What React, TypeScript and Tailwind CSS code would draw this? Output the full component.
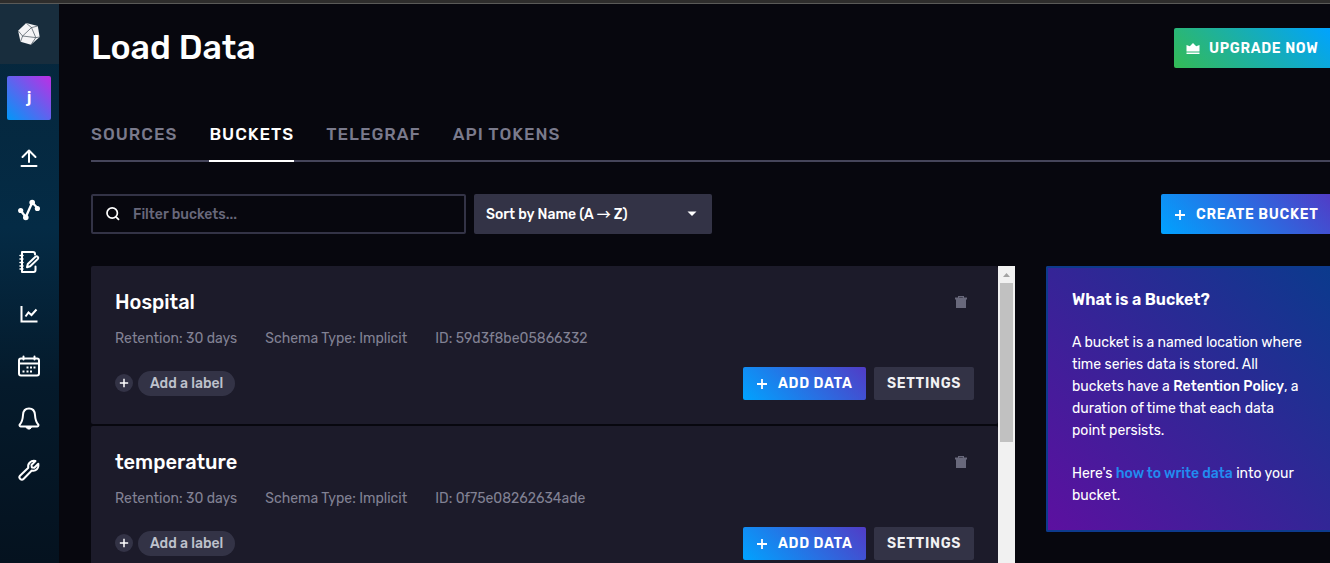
import React from 'react';
import type { ReactNode } from 'react';

type Bucket = { name: string; id: string };

const buckets: Bucket[] = [
  { name: 'Hospital', id: '59d3f8be05866332' },
  { name: 'temperature', id: '0f75e08262634ade' },
];

const tabs = ['Sources', 'Buckets', 'Telegraf', 'API Tokens'];

function Logo() {
  return (
    <svg viewBox="0 0 24 24" className="size-6" fill="#f4f4f6" stroke="#22303d" strokeWidth="0.6" strokeLinejoin="round">
      <path d="M9.2 1.1 20.800 4 22.700 15 14 22.700 3.500 19.800 1.100 8.700Z" stroke="none" />
      <path d="M14.500 5.600 5.600 14 18.800 15.600ZM9.200 1.100 14.500 5.600 20.800 4M1.100 8.700 5.600 14 3.500 19.800M22.700 15 18.800 15.600 14 22.700" fill="none" />
    </svg>
  );
}

function NavIcon({ children }: { children: ReactNode }) {
  return (
    <svg viewBox="0 0 24 24" className="size-6" fill="none" stroke="#fff" strokeWidth="2" strokeLinecap="round" strokeLinejoin="round">
      {children}
    </svg>
  );
}

const navItems: { label: string; icon: ReactNode }[] = [
  { label: 'Load Data', icon: <path d="M12 16V5M5.500 11 12 4.500l6.500 6.500M4.500 20h15" /> },
  {
    label: 'Data Explorer',
    icon: (
      <>
        <path d="M3.500 12.500 8.800 19 15.200 4.500 20.500 10" strokeWidth="2.300" />
        <g fill="#fff" stroke="none">
          <circle cx="3.700" cy="12.500" r="2.600" />
          <circle cx="8.800" cy="19.500" r="2.800" />
          <circle cx="15.200" cy="4.500" r="2.800" />
          <circle cx="20.400" cy="10.500" r="2.600" />
        </g>
      </>
    ),
  },
  {
    label: 'Notebooks',
    icon: (
      <>
        <path d="M18 4.500V4a2 2 0 0 0-2-2H5v20h11.500a2 2 0 0 0 2-2v-3.500" />
        <path d="M3 5.500h3M3 9h3M3 12.500h3M3 16h3M3 19h3" strokeWidth="1.500" />
        <path d="M10 17.200 10.800 14 18.700 6.600Q19.700 5.800 20.700 6.800T20.900 8.900L13.200 16.300Z" />
      </>
    ),
  },
  { label: 'Dashboards', icon: <path d="M4.500 4V19.500H20.500M8.500 14.500 11.500 10.500 14.500 13 19.500 7.500" strokeLinejoin="miter" strokeLinecap="butt" /> },
  {
    label: 'Tasks',
    icon: (
      <>
        <rect x="2" y="4.500" width="20" height="17" rx="2" />
        <path d="M2 9.500h20M6.500 2.500v3M17.500 2.500v3" />
        <path d="M9.500 13.500h2M13 13.500h2M16.500 13.500h2M5.500 17.500h2M9.500 17.500h2M13 17.500h2" strokeLinecap="butt" />
      </>
    ),
  },
  {
    label: 'Alerts',
    icon: (
      <>
        <path d="M12 2.500c-4 0-5.800 3-6 6.500-.3 5-1.300 7.500-3.200 9.500-.6.700-.2 2 .8 2h16.800c1 0 1.400-1.300.8-2-1.900-2-2.900-4.500-3.200-9.500C17.800 5.500 16 2.500 12 2.500Z" />
        <path d="M9.500 21.500h5l-1.500 1.500h-2Z" fill="#fff" strokeWidth="1" />
      </>
    ),
  },
  {
    label: 'Settings',
    icon: <path d="m18.500 3-4 4 .300 2.500 2.500.300 4-4c.800 4.500-2.500 7.700-6.500 6.700L6.500 21c-2 2-5.500-1-3.500-3.300l8.300-8C10.300 5.500 14 2 18.500 3Z" />,
  },
];

function Plus({ className }: { className: string }) {
  return (
    <svg viewBox="0 0 12 12" className={className} fill="none" stroke="currentColor" strokeWidth="1.800">
      <path d="M6 1v10M1 6h10" />
    </svg>
  );
}

function BucketCard({ name, id }: Bucket) {
  return (
    <article className="flex flex-col rounded-xs bg-[#1c1b2a] p-6">
      <div className="flex h-6 items-center justify-between">
        <h2 className="text-xl font-medium text-white">{name}</h2>
        <button aria-label={`Delete ${name}`} className="mr-[7px] text-[#68687b]">
          <svg viewBox="0 0 12 12" className="size-3" fill="currentColor">
            <path d="M3 1.500V0h6v1.500h3v2h-1V12H1V3.500H0v-2ZM4.200 1.500h3.600v-.6H4.200Z" />
          </svg>
        </button>
      </div>
      <div className="mt-3 flex h-6 items-center gap-7 pt-0.5 text-sm text-[#828294]">
        <span>Retention: 30 days</span>
        <span>Schema Type: Implicit</span>
        <span>ID: {id}</span>
      </div>
      <div className="mt-4 flex h-[34px] items-center justify-between">
        <div className="flex items-center gap-[5px]">
          <button aria-label="Add label" className="flex size-[18px] items-center justify-center rounded-full bg-[#333346] text-white">
            <Plus className="size-[10px]" />
          </button>
          <button className="h-[25px] rounded-full bg-[#333346] px-3 pt-0.5 text-sm font-medium text-[#bec2cc]">Add a label</button>
        </div>
        <div className="flex gap-2">
          <button className="flex h-[33px] w-[123px] items-center gap-[10px] rounded-xs bg-linear-[45deg,#00a3ff,#513cc6] pt-0.5 pl-[13px] text-sm font-semibold tracking-wider whitespace-nowrap text-white">
            <Plus className="size-3" />
            ADD DATA
          </button>
          <button className="h-[33px] w-[100px] rounded-xs bg-[#333346] pt-0.5 text-sm font-semibold tracking-wider text-[#f1f1f3]">SETTINGS</button>
        </div>
      </div>
    </article>
  );
}

export default function App() {
  return (
    <div className="flex h-screen flex-col overflow-hidden bg-[#07070e] font-[Rubik,Roboto,sans-serif] text-white">
      <div className="h-1 shrink-0 border-b border-[#5a5a58] bg-[#2e2d2c]" />
      <div className="flex min-h-0 flex-1">
        <nav className="flex w-[59px] shrink-0 flex-col bg-linear-[180deg,#06263b,#042b45_40%,#051a2b_68%,#05121f]">
          <a href="#home" aria-label="Home" className="flex h-[60px] items-center bg-[#182d3d] pl-[17px]">
            <Logo />
          </a>
          <a href="#account" className="mt-3 ml-[7px] flex size-11 items-center justify-center rounded-xs bg-linear-[45deg,#0098f8,#be2ee4] font-semibold">j</a>
          <div className="mt-3 flex flex-col">
            {navItems.map((item) => (
              <a key={item.label} href="#nav" aria-label={item.label} className="flex h-[52px] items-center pl-[17px]">
                <NavIcon>{item.icon}</NavIcon>
              </a>
            ))}
          </div>
        </nav>
        <main className="flex min-w-0 flex-1 flex-col pt-6 pl-8">
          <header className="flex h-10 shrink-0 items-center justify-between">
            <h1 className="text-[34px] leading-[38px] font-medium">Load Data</h1>
            <button className="flex h-10 w-[156px] items-center gap-[9px] rounded-l-xs bg-linear-[45deg,#34bb55,#00a3ff] pt-0.5 pl-3 text-sm font-semibold tracking-wider whitespace-nowrap">
              <svg viewBox="0 0 14 12" className="h-3 w-3.5" fill="#fff">
                <path d="M0.500 2 3.800 3.300 7 0 10.200 3.300 13.500 2V8.500H.5ZM.5 9.500h13V11H.5Z" />
              </svg>
              UPGRADE NOW
            </button>
          </header>
          <nav className="mt-10 flex h-[54px] shrink-0 gap-8 border-b-2 border-[#45455a] text-[17px]">
            {tabs.map((tab) => (
              <a
                key={tab}
                href="#tab"
                className={
                  tab === 'Buckets'
                    ? '-mb-0.5 flex items-center border-b-2 border-white pt-0.5 font-medium tracking-[1px] text-white uppercase'
                    : 'flex items-center pt-0.5 font-medium tracking-[1px] text-[#7a7a8c] uppercase'
                }
              >
                {tab}
              </a>
            ))}
          </nav>
          <div className="mt-8 flex h-10 shrink-0 gap-2">
            <label className="flex w-[375px] items-center gap-3 rounded-xs border-2 border-[#333346] px-3">
              <svg viewBox="0 0 16 16" className="size-4" fill="none" stroke="#fff" strokeWidth="1.700">
                <circle cx="7.200" cy="7" r="5.200" />
                <path d="m11 10.800 3 3" />
              </svg>
              <input aria-label="Filter buckets" placeholder="Filter buckets..." className="min-w-0 flex-1 bg-transparent pt-0.5 text-sm font-medium outline-none placeholder:text-[#68687b]" />
            </label>
            <label className="flex w-[238px] items-center rounded-xs bg-[#333346] px-3">
              <select aria-label="Sort buckets" className="min-w-0 flex-1 appearance-none bg-transparent pt-0.5 font-[Rubik,'Noto_Sans_CJK_JP',sans-serif] text-sm font-medium">
                <option>Sort by Name (A → Z)</option>
              </select>
              <svg viewBox="0 0 16 16" className="size-4" fill="#fff">
                <path d="M3.500 5.500h9L8 10Z" />
              </svg>
            </label>
            <button className="ml-auto flex h-10 w-[169px] items-center gap-[10px] rounded-l-xs bg-linear-[45deg,#00a3ff,#513cc6] pt-0.5 pl-[13px] text-sm font-semibold tracking-wider whitespace-nowrap">
              <Plus className="size-3" />
              CREATE BUCKET
            </button>
          </div>
          <div className="mt-8 flex min-h-0 flex-1 gap-[31px] overflow-hidden">
            <section className="flex min-w-0 flex-1">
              <div className="flex min-w-0 flex-1 flex-col gap-0.5">
                {buckets.map((bucket) => (
                  <BucketCard key={bucket.id} {...bucket} />
                ))}
              </div>
              <div className="flex w-[17px] flex-col items-center bg-[#f1f1f1]">
                <svg viewBox="0 0 17 17" className="size-[17px] shrink-0" fill="#a3a3a3">
                  <path d="M8.500 7 12 11H5Z" />
                </svg>
                <div className="h-[159px] w-[13px] bg-[#c1c1c1]" />
              </div>
            </section>
            <aside className="w-[284px] shrink-0">
              <div className="rounded-l-xs border-y-2 border-l-2 border-[#0d3a8c] bg-linear-[45deg,#5c10a0,#0b3a8d] pt-[21px] pr-5 pb-[23px] pl-6 text-sm leading-[22px]">
                <h2 className="text-base leading-[22px] font-semibold">What is a Bucket?</h2>
                <p className="mt-[21px]">
                  A bucket is a named location where time series data is stored. All buckets have a <strong className="font-medium">Retention Policy</strong>, a duration of time that each data point persists.
                </p>
                <p className="mt-[21px]">
                  Here's <a href="#docs" className="font-medium text-[#228cf0]">how to write data</a> into your bucket.
                </p>
              </div>
            </aside>
          </div>
        </main>
      </div>
    </div>
  );
}
